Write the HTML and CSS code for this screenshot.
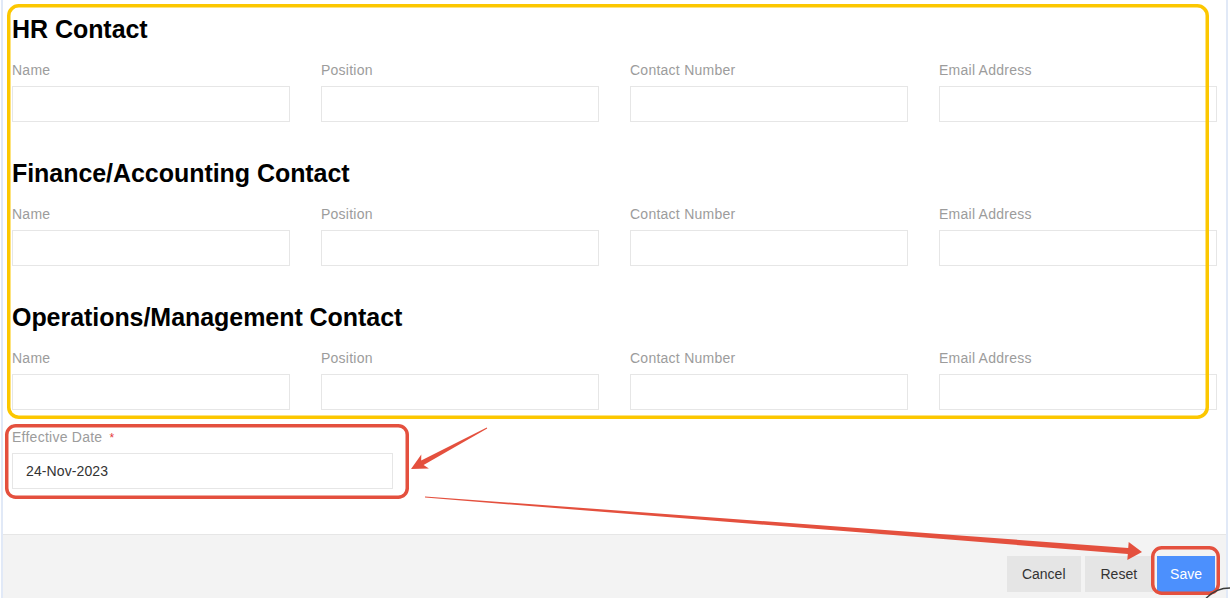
FILE: index.html
```html
<!DOCTYPE html>
<html lang="en">
<head>
<meta charset="utf-8">
<title>Contacts</title>
<link rel="stylesheet" href="styles.css">
</head>
<body>
<div class="panel">
  <div class="content">
    <section class="contact">
      <h2 class="contact-title">HR Contact</h2>
      <div class="grid">
        <div class="field"><label class="label">Name</label><input class="input" type="text"></div>
        <div class="field"><label class="label">Position</label><input class="input" type="text"></div>
        <div class="field"><label class="label">Contact Number</label><input class="input" type="text"></div>
        <div class="field"><label class="label">Email Address</label><input class="input" type="text"></div>
      </div>
    </section>
    <section class="contact">
      <h2 class="contact-title">Finance/Accounting Contact</h2>
      <div class="grid">
        <div class="field"><label class="label">Name</label><input class="input" type="text"></div>
        <div class="field"><label class="label">Position</label><input class="input" type="text"></div>
        <div class="field"><label class="label">Contact Number</label><input class="input" type="text"></div>
        <div class="field"><label class="label">Email Address</label><input class="input" type="text"></div>
      </div>
    </section>
    <section class="contact contact-last">
      <h2 class="contact-title">Operations/Management Contact</h2>
      <div class="grid">
        <div class="field"><label class="label">Name</label><input class="input" type="text"></div>
        <div class="field"><label class="label">Position</label><input class="input" type="text"></div>
        <div class="field"><label class="label">Contact Number</label><input class="input" type="text"></div>
        <div class="field"><label class="label">Email Address</label><input class="input" type="text"></div>
      </div>
    </section>
    <div class="field date-field">
      <label class="label">Effective Date <span class="req">*</span></label>
      <input class="input input-date" type="text" value="24-Nov-2023">
    </div>
  </div>
  <div class="footer">
    <button class="btn" type="button">Cancel</button>
    <button class="btn btn-reset" type="button">Reset</button>
    <button class="btn btn-primary" type="button">Save</button>
  </div>
</div>
<svg class="annot" width="1230" height="598" viewBox="0 0 1230 598" aria-hidden="true">
  <rect x="8.75" y="5.75" width="1198.5" height="411.5" rx="10" ry="10" fill="none" stroke="#fcc700" stroke-width="3.5"/>
  <rect x="6.75" y="425.75" width="400.5" height="71.5" rx="9" ry="9" fill="none" stroke="#e4503e" stroke-width="3.5"/>
  <rect x="1152.75" y="547.75" width="65.5" height="45.5" rx="9" ry="9" fill="none" stroke="#e4503e" stroke-width="3.5"/>
  <polygon points="411,469 428.9,468.4 423.6,465 487.2,428.4 486.8,427.6 421.2,460.6 421.3,454.4" fill="#e4503e"/>
  <polygon points="1142,552 1127.3,559.9 1127.8,553.9 425,497.6 425,496.4 1128.2,547.9 1128.7,541.9" fill="#e4503e"/>
  <circle cx="1230" cy="621" r="33" fill="none" stroke="#3a3a3a" stroke-width="1.5"/>
</svg>
</body>
</html>
```

FILE: styles.css
```css
html, body {
  margin: 0;
  padding: 0;
  background: #ffffff;
  height: 598px;
  overflow: hidden;
}

body {
  font-family: "Liberation Sans", Arial, sans-serif;
  color: #333333;
  position: relative;
}

.panel {
  margin: 0 2px 0 1px;
  border-left: 2px solid #e1e9f7;
  border-right: 2px solid #e1e9f7;
  min-height: 598px;
  display: flex;
  flex-direction: column;
}

.content {
  padding: 15px 9px 45px;
}

.contact {
  margin-bottom: 37px;
}

.contact-last {
  margin-bottom: 17px;
}

.contact-title {
  margin: 0;
  font-size: 25px;
  line-height: 28px;
  font-weight: bold;
  color: #000000;
  letter-spacing: -0.05px;
}

.grid {
  margin-top: 17px;
  display: grid;
  grid-template-columns: repeat(4, 1fr);
  column-gap: 31px;
}

.field {
  display: flex;
  flex-direction: column;
}

.label {
  display: block;
  font-size: 14px;
  line-height: 20px;
  color: #9c9c9c;
  letter-spacing: 0.25px;
  margin-bottom: 6px;
}

.req {
  color: #e4393c;
  font-size: 12px;
  margin-left: 3px;
}

.input {
  box-sizing: border-box;
  height: 36px;
  width: 100%;
  margin: 0;
  padding: 0 13px;
  border: 1px solid #e6e6e6;
  border-radius: 0;
  background: #ffffff;
  font-family: "Liberation Sans", Arial, sans-serif;
  font-size: 14px;
  letter-spacing: 0.1px;
  color: #333333;
  outline: none;
}

.date-field {
  width: 381px;
}

.date-field .label {
  margin-bottom: 5px;
}

.footer {
  flex: 1;
  display: flex;
  justify-content: flex-end;
  align-items: flex-start;
  gap: 4px;
  padding: 21px 11px 20px;
  background: #f3f3f3;
  border-top: 1px solid #e6e6e6;
}

.btn {
  height: 36px;
  padding: 0 15px;
  border: none;
  border-radius: 0;
  background: #e5e5e5;
  font-family: "Liberation Sans", Arial, sans-serif;
  font-size: 14px;
  color: #333333;
  cursor: pointer;
}

.btn-reset {
  padding: 0 16px;
}

.btn-primary {
  padding: 0 13px;
  background: #4c90fd;
  color: #ffffff;
}

.annot {
  position: absolute;
  left: 0;
  top: 0;
  pointer-events: none;
}
```
